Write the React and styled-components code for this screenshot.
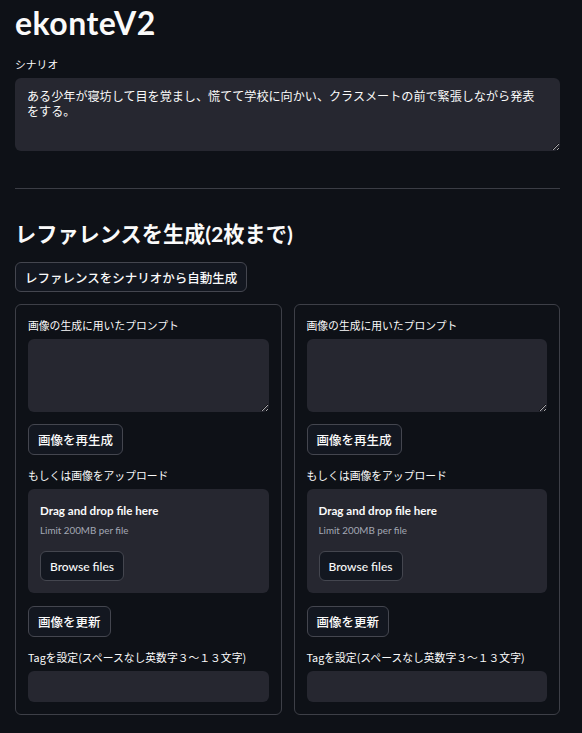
import React from "react";
import styled, { createGlobalStyle } from "styled-components";

const GlobalStyle = createGlobalStyle`
  html {
    color-scheme: dark;
  }
  body {
    margin: 0;
    background: #0e1117;
    color: #fafafa;
    font-family: "Lato", "Noto Sans CJK JP", sans-serif;
  }
`;

const Main = styled.div`
  width: 545px;
  margin-left: 15px;
  padding-bottom: 18px;
`;

const Title = styled.h1`
  margin: 0 0 14px;
  padding-top: 4px;
  font-size: 32px;
  line-height: 38px;
  font-weight: 700;
  letter-spacing: 0.5px;
`;

const Label = styled.div`
  font-family: "Noto Sans CJK JP", sans-serif;
  font-size: 10.8px;
  line-height: 16px;
  margin-bottom: 6px;
  color: #fafafa;
`;

const TextArea = styled.textarea`
  display: block;
  box-sizing: border-box;
  width: 100%;
  height: 73px;
  margin: 0;
  padding: 10px 14px 10px 12px;
  border: none;
  border-radius: 6px;
  background: #262730;
  color: #fafafa;
  font-family: "Noto Sans CJK JP", sans-serif;
  font-size: 12.1px;
  line-height: 15.3px;
  resize: vertical;
  outline: none;
`;

const Divider = styled.hr`
  margin: 37px 0 0;
  border: none;
  border-top: 1px solid #3b3d45;
`;

const Heading = styled.h2`
  margin: 30px 0 13px;
  font-family: "Lato", "Noto Sans CJK JP", sans-serif;
  font-size: 21.2px;
  line-height: 30px;
  font-weight: 700;
`;

const Button = styled.button`
  display: inline-flex;
  align-items: center;
  box-sizing: border-box;
  height: ${(p) => p.h || 31}px;
  margin-top: ${(p) => p.mt || 0}px;
  padding: 0 9px;
  border: 1px solid #44464f;
  border-radius: 6px;
  background: #131720;
  color: #fafafa;
  font-family: "Lato", "Noto Sans CJK JP", sans-serif;
  font-size: ${(p) => p.fs || 12.5}px;
  font-weight: 500;
  cursor: pointer;
`;

const Columns = styled.div`
  display: grid;
  grid-template-columns: 1fr 1fr;
  gap: 12px;
  margin-top: 12px;
`;

const Card = styled.div`
  border: 1px solid #3d3f47;
  border-radius: 6px;
  padding: 12px;
  display: flex;
  flex-direction: column;
`;

const Block = styled.div`
  margin-bottom: ${(p) => p.mb ?? 12}px;
`;

const DropZone = styled.div`
  box-sizing: border-box;
  height: 104px;
  border-radius: 6px;
  background: #262730;
  padding: 12px;
`;

const DropTitle = styled.div`
  font-size: 11.6px;
  line-height: 20px;
  font-weight: 700;
`;

const DropLimit = styled.div`
  font-size: 9.8px;
  line-height: 18px;
  color: #a3a8b4;
`;

const Input = styled.input`
  display: block;
  box-sizing: border-box;
  width: 100%;
  height: 31px;
  border: none;
  border-radius: 6px;
  background: #262730;
  color: #fafafa;
  padding: 0 12px;
  outline: none;
`;

function RefCard() {
  return (
    <Card>
      <Block>
        <Label>画像の生成に用いたプロンプト</Label>
        <TextArea />
      </Block>
      <Block>
        <Button>画像を再生成</Button>
      </Block>
      <Block mb={13}>
        <Label>もしくは画像をアップロード</Label>
        <DropZone>
          <DropTitle>Drag and drop file here</DropTitle>
          <DropLimit>Limit 200MB per file</DropLimit>
          <Button h={30} fs={12} mt={12}>Browse files</Button>
        </DropZone>
      </Block>
      <Block>
        <Button>画像を更新</Button>
      </Block>
      <Block mb={0}>
        <Label>Tagを設定(スペースなし英数字３～１３文字)</Label>
        <Input />
      </Block>
    </Card>
  );
}

export default function App() {
  return (
    <>
      <GlobalStyle />
      <Main>
        <Title>ekonteV2</Title>
        <Label>シナリオ</Label>
        <TextArea defaultValue="ある少年が寝坊して目を覚まし、慌てて学校に向かい、クラスメートの前で緊張しながら発表をする。" />
        <Divider />
        <Heading>レファレンスを生成(2枚まで)</Heading>
        <Button h={30}>レファレンスをシナリオから自動生成</Button>
        <Columns>
          <RefCard />
          <RefCard />
        </Columns>
      </Main>
    </>
  );
}
